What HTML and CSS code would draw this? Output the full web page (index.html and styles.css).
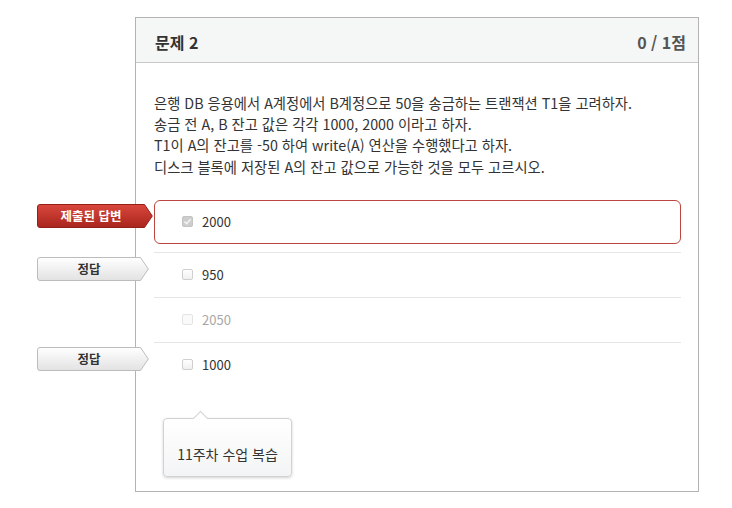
FILE: index.html
```html
<!DOCTYPE html>
<html lang="ko">
<head>
<meta charset="utf-8">
<title>문제 2</title>
<link rel="stylesheet" href="styles.css">
</head>
<body>
<div class="card">
  <div class="card-header">
    <h2 class="title">문제 2</h2>
    <span class="score">0 / 1점</span>
  </div>
  <div class="card-body">
    <p class="question">은행 DB 응용에서 A계정에서 B계정으로 50을 송금하는 트랜잭션 T1을 고려하자.<br>송금 전 A, B 잔고 값은 각각 1000, 2000 이라고 하자.<br>T1이 A의 잔고를 -50 하여 write(A) 연산을 수행했다고 하자.<br>디스크 블록에 저장된 A의 잔고 값으로 가능한 것을 모두 고르시오.</p>
    <ul class="options">
      <li class="row row-first">
        <span class="ribbon ribbon-red">
          <svg class="ribbon-bg" width="116" height="24" viewBox="0 0 116 24">
            <defs><linearGradient id="gr" x1="0" y1="0" x2="0" y2="1"><stop offset="0" stop-color="#d9473d"/><stop offset="1" stop-color="#a9251d"/></linearGradient></defs>
            <path d="M3 0.5 H107.5 L115.3 12 L107.5 23.5 H3 Q0.5 23.5 0.5 21 V3 Q0.5 0.5 3 0.5 Z" fill="url(#gr)" stroke="#952019"/>
          </svg>
          <span class="ribbon-text rt-red">제출된 답변</span>
        </span>
        <div class="opt opt-selected">
          <span class="cb cb-checked"><svg width="11" height="11" viewBox="0 0 11 11"><path d="M2.5 5.6 L4.6 7.7 L8.6 3.2" fill="none" stroke="#f4f4f4" stroke-width="1.6"/></svg></span>
          <span class="opt-text">2000</span>
        </div>
      </li>
      <li class="row">
        <span class="ribbon ribbon-gray">
          <svg class="ribbon-bg" width="112" height="24" viewBox="0 0 112 24">
            <defs><linearGradient id="gg" x1="0" y1="0" x2="0" y2="1"><stop offset="0" stop-color="#ffffff"/><stop offset="1" stop-color="#e2e2e2"/></linearGradient></defs>
            <path d="M3 0.5 H103.5 L111.3 12 L103.5 23.5 H3 Q0.5 23.5 0.5 21 V3 Q0.5 0.5 3 0.5 Z" fill="url(#gg)" stroke="#bcbcbc"/>
          </svg>
          <span class="ribbon-text rt-gray">정답</span>
        </span>
        <div class="opt">
          <span class="cb"></span>
          <span class="opt-text">950</span>
        </div>
      </li>
      <li class="row">
        <div class="opt opt-muted">
          <span class="cb cb-muted"></span>
          <span class="opt-text">2050</span>
        </div>
      </li>
      <li class="row row-last">
        <span class="ribbon ribbon-gray">
          <svg class="ribbon-bg" width="112" height="24" viewBox="0 0 112 24">
            <defs><linearGradient id="gg2" x1="0" y1="0" x2="0" y2="1"><stop offset="0" stop-color="#ffffff"/><stop offset="1" stop-color="#e2e2e2"/></linearGradient></defs>
            <path d="M3 0.5 H103.5 L111.3 12 L103.5 23.5 H3 Q0.5 23.5 0.5 21 V3 Q0.5 0.5 3 0.5 Z" fill="url(#gg2)" stroke="#bcbcbc"/>
          </svg>
          <span class="ribbon-text rt-gray">정답</span>
        </span>
        <div class="opt">
          <span class="cb"></span>
          <span class="opt-text">1000</span>
        </div>
      </li>
    </ul>
    <div class="tip">
      <span class="tip-arrow"></span>
      <span class="tip-text">11주차 수업 복습</span>
    </div>
  </div>
</div>
</body>
</html>
```
FILE: styles.css
```css
* { box-sizing: border-box; }
html, body { margin: 0; padding: 0; background: #fff; }
body {
  font-family: "Noto Sans CJK KR", "Noto Sans", sans-serif;
  color: #333;
}
.card {
  margin: 17px 0 0 135px;
  width: 564px;
  height: 475px;
  border: 1px solid #b3b3b3;
  background: #fff;
}
.card-header {
  height: 45px;
  background: #f5f6f6;
  border-bottom: 1px solid #c8c8c8;
  display: flex;
  align-items: center;
  justify-content: space-between;
  padding: 3px 12px 0 19px;
}
.title {
  margin: 0;
  font-size: 16px;
  font-weight: 700;
  color: #333;
}
.score {
  font-size: 16px;
  font-weight: 700;
  color: #555;
}
.card-body {
  padding: 29px 17px 0 18px;
}
.question {
  margin: 0;
  font-size: 14.3px;
  line-height: 21.2px;
  color: #333;
}
.options {
  list-style: none;
  margin: 23px 0 0 0;
  padding: 0;
}
.row {
  position: relative;
  border-bottom: 1px solid #e6e6e6;
}
.row-first { padding-bottom: 8px; }
.row-last { border-bottom: none; }
.opt {
  height: 44px;
  border: 1px solid transparent;
  border-radius: 6px;
  display: flex;
  align-items: center;
  padding-left: 27px;
  font-size: 13px;
  color: #333;
}
.opt-selected { border-color: #bb463f; }
.opt-muted { color: #a8a8a8; }
.opt-text { margin-left: 9px; }
.cb {
  width: 11px;
  height: 11px;
  border: 1px solid #cfcfcf;
  border-radius: 2px;
  background: linear-gradient(#fff, #f0f0f0);
  display: inline-flex;
}
.cb svg { display: block; margin: -1px; }
.cb-checked {
  background: #cdcdcd;
  border-color: #c4c4c4;
}
.cb-muted { border-color: #e4e4e4; background: #fafafa; }
.ribbon {
  position: absolute;
  top: 4px;
  left: -117px;
  height: 24px;
  display: flex;
  align-items: center;
}
.ribbon-red { width: 116px; }
.ribbon-gray { width: 112px; }
.ribbon-bg { position: absolute; left: 0; top: 0; display: block; }
.ribbon-text {
  position: relative;
  font-size: 12.5px;
  font-weight: 700;
  text-align: center;
}
.rt-red { width: 108px; color: #fff; }
.rt-gray { width: 104px; color: #333; }
.tip {
  position: relative;
  margin: 31px 0 0 9px;
  width: 129px;
  height: 59px;
  border: 1px solid #d2d2d2;
  border-radius: 4px;
  background: linear-gradient(#ffffff, #f3f4f5);
  box-shadow: 0 1px 3px rgba(0,0,0,0.18);
  display: flex;
  align-items: flex-end;
  justify-content: center;
  padding-bottom: 13px;
}
.tip-arrow {
  position: absolute;
  top: -6px;
  left: 31px;
  width: 11px;
  height: 11px;
  background: #fff;
  border-top: 1px solid #d2d2d2;
  border-left: 1px solid #d2d2d2;
  transform: rotate(45deg);
}
.tip-text {
  font-size: 14px;
  line-height: 18px;
  color: #333;
}
```
